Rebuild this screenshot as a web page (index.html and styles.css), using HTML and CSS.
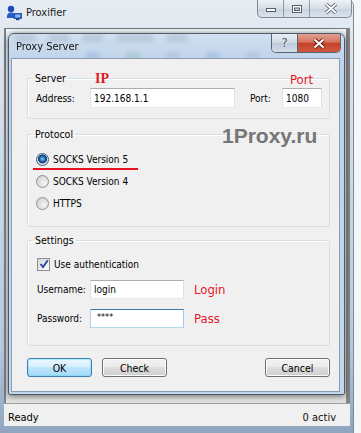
FILE: index.html
```html
<!DOCTYPE html>
<html>
    <head>
        <meta charset="utf-8">
        <meta name="viewport" content="width=device-width, initial-scale=1">
        <title>Proxy Server</title>
        <link rel="stylesheet" href="styles.css">
    </head>
    <body>
        <div class="desktop">
            <!-- main Proxifier window, behind the dialog -->
            <div class="app">
                <div class="app-title">
                    <svg class="app-icon" width="16" height="16" viewBox="0 0 16 16">
                        <circle cx="5" cy="4" r="3.2" fill="#1d4cbd"/>
                        <path d="M0.8 13 C0.8 8.8 2.8 7.6 5 7.6 C7.2 7.6 9 8.8 9 13 Z" fill="#2a5cd0"/>
                        <rect x="8" y="8.5" width="7.4" height="5" fill="#2e66d8" stroke="#163d98" stroke-width="0.8"/>
                        <rect x="9.2" y="9.6" width="5" height="2.8" fill="#8fb6f2"/>
                        <rect x="10" y="13.6" width="3.4" height="1.6" fill="#163d98"/>
                    </svg>
                    <span class="app-name">Proxifier</span>
                    <div class="caption-btns">
                        <span class="cb">
                            <svg width="12" height="8" viewBox="0 0 12 8"><rect x="1.5" y="3.5" width="9" height="3" fill="#fff" stroke="#59616b"/></svg>
                        </span>
                        <span class="cb">
                            <svg width="12" height="10" viewBox="0 0 12 10"><rect x="1.5" y="1.5" width="9" height="7" fill="#fff" stroke="#59616b"/><rect x="3.5" y="4" width="5" height="2.5" fill="#c9d3de" stroke="#59616b"/></svg>
                        </span>
                        <span class="cb cb-close">
                            <svg width="14" height="11" viewBox="0 0 14 11"><path d="M2 1 L12 10 M12 1 L2 10" stroke="#59616b" stroke-width="3.6"/><path d="M2 1 L12 10 M12 1 L2 10" stroke="#fff" stroke-width="1.8"/></svg>
                        </span>
                    </div>
                </div>
                <div class="app-frame">
                    <div class="app-body">
                        <!-- menu and toolbar are hidden behind the dialog glass, only blurred shapes show -->
                        <div class="menubar">
                            <span class="menu-blur w1"></span>
                            <span class="menu-blur w1"></span>
                            <span class="menu-blur w1"></span>
                            <span class="menu-blur w2"></span>
                            <span class="menu-blur w1"></span>
                        </div>
                        <div class="toolbar">
                            <span class="tb-icon blue"></span>
                            <span class="tb-icon green"></span>
                            <span class="tb-icon grey"></span>
                            <span class="tb-icon blue"></span>
                            <span class="tb-icon grey"></span>
                        </div>
                        <div class="app-content"></div>
                    </div>
                    <div class="statusbar">
                        <span>Ready</span>
                        <span class="status-right">0 activ</span>
                    </div>
                </div>
            </div>

            <!-- Proxy Server dialog -->
            <div class="dialog">
                <div class="dlg-title">
                    <span class="dlg-name">Proxy Server</span>
                    <div class="dlg-btns">
                        <span class="dlg-help">?</span>
                        <span class="dlg-close">
                            <svg width="14" height="11" viewBox="0 0 14 11"><path d="M2.5 1.5 L11.5 9.5 M11.5 1.5 L2.5 9.5" stroke="#5c1c14" stroke-width="3.8"/><path d="M2.5 1.5 L11.5 9.5 M11.5 1.5 L2.5 9.5" stroke="#fff" stroke-width="2"/></svg>
                        </span>
                    </div>
                </div>
                <div class="dlg-client">
                    <fieldset class="group server">
                        <legend>Server</legend>
                        <div class="server-row">
                            <label class="addr-label">Address:</label>
                            <input class="field addr" type="text" value="192.168.1.1">
                            <label class="port-label">Port:</label>
                            <input class="field port" type="text" value="1080">
                        </div>
                    </fieldset>

                    <fieldset class="group protocol">
                        <legend>Protocol</legend>
                        <div class="radio checked"><span class="radio-dot"></span>SOCKS Version 5</div>
                        <div class="radio"><span class="radio-dot"></span>SOCKS Version 4</div>
                        <div class="radio"><span class="radio-dot"></span>HTTPS</div>
                    </fieldset>

                    <fieldset class="group settings">
                        <legend>Settings</legend>
                        <div class="check-row">
                            <span class="checkbox">
                                <svg width="10" height="10" viewBox="0 0 10 10"><path d="M1.5 5 L4 8 L8.8 1.2" fill="none" stroke="#2b3f9a" stroke-width="1.8"/></svg>
                            </span>
                            Use authentication
                        </div>
                        <div class="auth-row">
                            <label class="auth-label">Username:</label>
                            <input class="field auth" type="text" value="login">
                            <span class="note">Login</span>
                        </div>
                        <div class="auth-row pass-row">
                            <label class="auth-label">Password:</label>
                            <input class="field auth focused" type="text" value="****">
                            <span class="note">Pass</span>
                        </div>
                    </fieldset>

                    <div class="buttons">
                        <button class="btn default">OK</button>
                        <button class="btn">Check</button>
                        <button class="btn cancel">Cancel</button>
                    </div>

                    <!-- red notes and watermark drawn over the dialog -->
                    <span class="mark mark-ip">IP</span>
                    <span class="mark mark-port">Port</span>
                    <span class="mark-underline"></span>
                    <span class="watermark">1Proxy.ru</span>
                </div>
            </div>
        </div>
    </body>
</html>
```

FILE: styles.css
```css
body {
    margin: 0;
    width: 361px;
    height: 433px;
    overflow: hidden;
    font-family: "DejaVu Sans Condensed", "Liberation Sans", sans-serif;
    font-size: 10px;
    color: #000;
}

.desktop {
    position: relative;
    width: 361px;
    height: 433px;
    background: linear-gradient(90deg, #e9edf1, #f4f6f8);
}

/* ---------- main window ---------- */

.app {
    position: absolute;
    left: 0;
    top: 0;
    width: 353px;
    height: 433px;
    display: flex;
    flex-direction: column;
    border-radius: 6px 6px 0 0;
    background: linear-gradient(180deg, #e6ecf2 0, #d4dfeb 30%, #b9cbe0 80%, #8fa5bf 100%);
    box-shadow: 1px 0 0 #7d8897;
}

.app-title {
    height: 28px;
    display: flex;
    align-items: flex-start;
    flex-shrink: 0;
}

.app-icon {
    margin: 5px 0 0 6px;
}

.app-name {
    margin-left: 4px;
    line-height: 26px;
    font-size: 11px;
    color: #1c1c1c;
}

.caption-btns {
    margin-left: auto;
    margin-right: 1px;
    display: flex;
    height: 17px;
    border: 1px solid #7f8b99;
    border-top: none;
    border-radius: 0 0 5px 5px;
    overflow: hidden;
    background: linear-gradient(180deg, #eef2f6, #d5dde7 50%, #c7d2df 51%, #dbe3ec);
}

.cb {
    width: 25px;
    display: flex;
    align-items: center;
    justify-content: center;
    border-right: 1px solid #8e99a6;
}

.cb-close {
    width: 41px;
    border-right: none;
}

.app-frame {
    flex: 1;
    display: flex;
    flex-direction: column;
    padding: 0 3px 7px 4px;
}

.app-body {
    flex: 1;
    display: flex;
    flex-direction: column;
    background: #ececec;
    border-top: 1px solid #6f7b88;
    border-left: 2px solid #7b8491;
    border-right: 4px solid #858585;
}

.menubar {
    height: 18px;
    display: flex;
    gap: 12px;
    align-items: center;
    padding-left: 8px;
    background: linear-gradient(180deg, #f5f7fa, #dfe6ee);
}

.menu-blur {
    height: 7px;
    border-radius: 3px;
    background: #8c949e;
    filter: blur(1.5px);
}

.menu-blur.w1 { width: 22px; }
.menu-blur.w2 { width: 38px; }

.toolbar {
    height: 22px;
    display: flex;
    gap: 26px;
    align-items: center;
    padding-left: 80px;
    background: #e9edf2;
}

.tb-icon {
    width: 14px;
    height: 12px;
    border-radius: 2px;
}

.tb-icon.blue { background: #3b6fc4; }
.tb-icon.green { background: #4e9a52; }
.tb-icon.grey { background: #8a8f96; }

.app-content {
    flex: 1;
    background: linear-gradient(180deg, #f4f4f4, #e2e2e2);
}

.statusbar {
    height: 23px;
    display: flex;
    align-items: center;
    justify-content: space-between;
    padding: 5px 14px 0 4px;
    box-sizing: border-box;
    font-size: 11px;
    background: #f0f0f0;
    border-top: 1px solid #a0a0a0;
}

.status-right {
    color: #111;
}

/* ---------- dialog ---------- */

.dialog {
    position: absolute;
    left: 8px;
    top: 33px;
    width: 337px;
    height: 362px;
    box-sizing: border-box;
    display: flex;
    flex-direction: column;
    border: 1px solid #4d5a69;
    border-radius: 6px 6px 2px 2px;
    background: linear-gradient(180deg, rgba(200, 218, 238, 0.72) 0, rgba(188, 209, 233, 0.9) 26px, #bcd2ea 40px, #c3d7ed 100%);
    backdrop-filter: blur(2px);
    box-shadow: 0 1px 6px rgba(0, 0, 0, 0.55);
}

.dlg-title {
    height: 24px;
    display: flex;
    align-items: flex-start;
    flex-shrink: 0;
}

.dlg-name {
    margin-left: 7px;
    line-height: 25px;
    font-size: 11px;
    color: #111;
}

.dlg-btns {
    margin-left: auto;
    margin-right: 3px;
    display: flex;
    height: 18px;
    border: 1px solid #5a6573;
    border-top: none;
    border-radius: 0 0 5px 5px;
    overflow: hidden;
}

.dlg-help {
    width: 25px;
    text-align: center;
    font-size: 13px;
    line-height: 17px;
    color: #4f5965;
    text-shadow: 0 0 2px #fff;
    background: linear-gradient(180deg, #e7edf3, #cfd9e4 50%, #bccadb 51%, #d3dde9);
    border-right: 1px solid #5a6573;
}

.dlg-close {
    width: 42px;
    display: flex;
    align-items: center;
    justify-content: center;
    background: linear-gradient(180deg, #e4a091 0, #d6735c 45%, #c5432a 52%, #d0583c 100%);
}

.dlg-client {
    position: relative;
    flex: 1;
    margin: 0 4px 2px 2px;
    padding: 0 9px 0 15px;
    display: flex;
    flex-direction: column;
    background: #f0f0f1;
    border: 1px solid #8a9db4;
}

/* group boxes */

.group {
    margin: 0;
    border: 1px solid #d5dfe5;
    border-radius: 3px;
    box-shadow: inset 1px 1px 0 #fff;
}

.group legend {
    padding: 0 2px;
    margin-left: -3px;
    line-height: 14px;
    font-size: 10.5px;
}

.server {
    margin-top: 12px;
    padding: 3px 6px 10px 8px;
}

.protocol {
    margin-top: 8px;
    padding: 7px 6px 12px 8px;
}

.settings {
    margin-top: 6px;
    padding: 9px 6px 17px 9px;
}

.settings legend {
    margin-left: -4px;
}

.field {
    box-sizing: border-box;
    height: 20px;
    margin: 0;
    padding: 0 3px;
    font-family: inherit;
    font-size: 10px;
    color: #000;
    background: #fff;
    border: 1px solid;
    border-color: #abadb3 #dbdfe6 #e3e9ef #e2e3ea;
    outline: none;
}

.server-row {
    display: flex;
    align-items: center;
}

.addr-label {
    width: 54px;
}

.field.addr {
    width: 145px;
}

.port-label {
    margin-left: 15px;
    width: 32px;
}

.field.port {
    width: 40px;
}

/* radio buttons */

.radio {
    position: relative;
    height: 22px;
    display: flex;
    align-items: center;
}

.radio-dot {
    width: 11px;
    height: 11px;
    margin-right: 4px;
    border-radius: 50%;
    border: 1px solid #8e8f8f;
    background: radial-gradient(circle at 65% 65%, #f4f4f4 0, #e2e2e2 45%, #c8c8c8 100%);
}

.radio.checked .radio-dot {
    border-color: #2c628b;
    background: radial-gradient(circle at 50% 45%, #8fd0f5 0, #2e86c8 2px, #12437c 3.5px, #1b3f6a 4.2px, #e3e3e3 4.8px, #cfcfcf 100%);
}

/* checkbox and auth rows */

.check-row {
    height: 16px;
    display: flex;
    align-items: center;
}

.checkbox {
    width: 11px;
    height: 11px;
    margin-right: 4px;
    display: flex;
    align-items: center;
    justify-content: center;
    border: 1px solid #8e8f8f;
    background: linear-gradient(135deg, #d7d7d7, #fbfbfb);
}

.auth-row {
    margin-top: 8px;
    display: flex;
    align-items: center;
}

.pass-row {
    margin-top: 10px;
}

.auth-label {
    width: 53px;
}

.field.auth {
    width: 94px;
    height: 19px;
}

.field.focused {
    border-color: #3d7bad #a4c9e3 #b7d9ed #b5cfe7;
    font-size: 9px;
    padding-left: 6px;
    padding-bottom: 4px;
}

.note {
    margin-left: 10px;
    font-size: 13px;
    color: #e3171f;
}

/* buttons */

.buttons {
    margin-top: 12px;
    display: flex;
    gap: 10px;
}

.btn {
    width: 65px;
    height: 19px;
    padding: 0;
    font-family: inherit;
    font-size: 10.5px;
    color: #000;
    border: 1px solid #707070;
    border-radius: 3px;
    background: linear-gradient(180deg, #f2f2f2 0, #ebebeb 45%, #dddddd 50%, #cfcfcf 100%);
    box-shadow: inset 0 0 0 1px #fcfcfc;
}

.btn.default {
    border-color: #3c7fb1;
    background: linear-gradient(180deg, #eaf6fd 0, #d9f0fc 45%, #bee6fd 50%, #a7d9f5 100%);
    box-shadow: inset 0 0 0 1px #48d7fb55;
}

.btn.cancel {
    margin-left: auto;
}

/* annotations over the dialog */

.mark {
    position: absolute;
    color: #e3171f;
    line-height: 16px;
}

.mark-ip {
    left: 83px;
    top: 12px;
    font-family: "Liberation Serif", serif;
    font-weight: bold;
    font-size: 14px;
}

.mark-port {
    left: 278px;
    top: 13px;
    font-size: 13px;
}

.mark-underline {
    position: absolute;
    left: 21px;
    top: 109px;
    width: 105px;
    height: 2px;
    background: #e3141f;
}

.watermark {
    position: absolute;
    left: 210px;
    top: 65px;
    font-family: "Liberation Sans", sans-serif;
    font-weight: bold;
    font-size: 21px;
    line-height: 24px;
    color: #767676;
}
```
